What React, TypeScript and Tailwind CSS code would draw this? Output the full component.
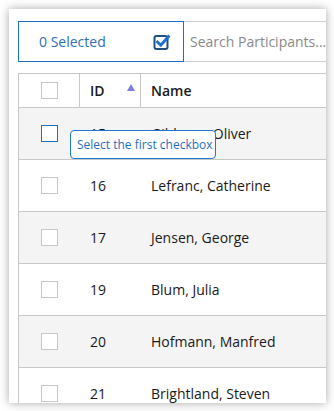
import React from "react";

const rows = [
  { id: "15", name: "Gibbons, Oliver" },
  { id: "16", name: "Lefranc, Catherine" },
  { id: "17", name: "Jensen, George" },
  { id: "19", name: "Blum, Julia" },
  { id: "20", name: "Hofmann, Manfred" },
  { id: "21", name: "Brightland, Steven" },
];

function CheckIcon() {
  return (
    <svg width="18" height="18" viewBox="0 0 18 18">
      <rect x="1.5" y="3" width="13" height="13" rx="2" fill="none" stroke="#1f4f80" strokeWidth="2" />
      <path d="M4.5 9 L7.8 12.2 L15.5 3.5" fill="none" stroke="#1a6fd0" strokeWidth="2.8" strokeLinecap="square" />
    </svg>
  );
}

export default function App() {
  return (
    <div
      className="w-[334px] h-[411px] bg-white p-[9px] overflow-hidden"
      style={{ fontFamily: '"Open Sans", "Noto Sans", sans-serif' }}
    >
      <div className="relative w-[317px] h-[394px] bg-white shadow-[0_0_9px_rgba(0,0,0,0.35)] overflow-hidden pl-[9px] pt-[12px]">
        <div className="flex w-[340px]">
          <div className="flex items-center justify-between w-[166px] h-[41px] border border-[#1f6fc0] pl-[20px] pr-[12px] shrink-0">
            <span className="text-[14px] text-[#2f6fb6]">0 Selected</span>
            <CheckIcon />
          </div>
          <div className="flex items-center flex-1 h-[41px] border-y border-[#cfcfcf] pl-[6px]">
            <span className="text-[14px] text-[#8a8a8a] whitespace-nowrap">Search Participants...</span>
          </div>
        </div>

        <div className="mt-[11px] w-[340px] border-l border-[#c8c8c8] text-[14px] text-[#1a1a1a]">
          <div className="flex h-[35px] border-y border-[#c8c8c8] bg-white">
            <div className="w-[61px] flex items-center justify-center border-r border-[#c8c8c8]">
              <div className="w-[17px] h-[17px] border border-[#c8c8c8] bg-white" />
            </div>
            <div className="relative w-[61px] flex items-center pl-[10px] border-r border-[#c8c8c8] font-semibold">
              ID
              <svg className="absolute left-[47px] top-[10px]" width="8" height="7" viewBox="0 0 8 7">
                <path d="M4 0 L8 7 L0 7 Z" fill="#7f7fe0" />
              </svg>
            </div>
            <div className="flex-1 flex items-center pl-[10px] font-semibold">Name</div>
          </div>
          {rows.map((r, i) => (
            <div
              key={r.id}
              className={`flex h-[52px] border-b border-[#c8c8c8] ${i % 2 === 0 ? "bg-[#f4f4f4]" : "bg-white"}`}
            >
              <div className="w-[61px] flex items-center justify-center">
                <div
                  className={`w-[17px] h-[17px] border bg-white ${i === 0 ? "border-[#1f6fc0]" : "border-[#c8c8c8]"}`}
                />
              </div>
              <div className="w-[61px] flex items-center pl-[10px]">{r.id}</div>
              <div className="flex-1 flex items-center pl-[10px]">{r.name}</div>
            </div>
          ))}
        </div>

        <div className="absolute left-[61px] top-[121px] w-[146px] h-[29px] bg-white border border-[#1f78d0] rounded-[4px] flex items-center pl-[6px]">
          <span className="text-[12px] text-[#1f6fc0] whitespace-nowrap">Select the first checkbox</span>
        </div>
      </div>
    </div>
  );
}
